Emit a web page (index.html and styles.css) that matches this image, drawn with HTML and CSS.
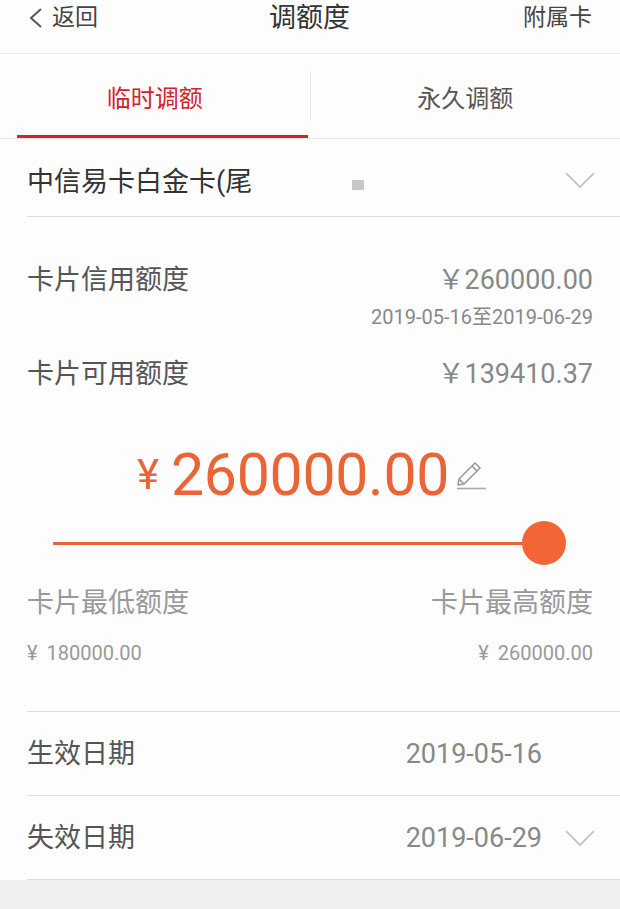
FILE: index.html
```html
<!DOCTYPE html>
<html lang="zh-CN">

<head>
    <meta charset="UTF-8">
    <meta name="viewport" content="width=device-width, initial-scale=1.0">
    <title>调额度</title>
    <link rel="stylesheet" href="styles.css">
</head>

<body>
    <div class="page">
        <header class="topbar">
            <div class="back">
                <svg class="back-icon" width="16" height="22" viewBox="0 0 16 22">
                    <polyline points="14,2 4,11 14,20" fill="none" stroke="#555" stroke-width="2" />
                </svg>
                <span>返回</span>
            </div>
            <div class="title">调额度</div>
            <div class="extra">附属卡</div>
        </header>

        <nav class="tabs">
            <div class="tab active">
                <span class="tab-label">临时调额</span>
                <span class="tab-bar"></span>
            </div>
            <span class="tab-divider"></span>
            <div class="tab">
                <span class="tab-label">永久调额</span>
                <span class="tab-bar"></span>
            </div>
        </nav>

        <div class="card-row">
            <span class="card-name">中信易卡白金卡(尾</span>
            <span class="mask"></span>
            <svg class="chevron" width="30" height="18" viewBox="0 0 30 18">
                <polyline points="1,2 15,16 29,2" fill="none" stroke="#bbb" stroke-width="1.6" />
            </svg>
        </div>

        <section class="limits">
            <div class="info-row">
                <span class="label">卡片信用额度</span>
                <div class="info-right">
                    <span class="value">￥260000.00</span>
                    <span class="period">2019-05-16至2019-06-29</span>
                </div>
            </div>
            <div class="info-row second">
                <span class="label">卡片可用额度</span>
                <span class="value">￥139410.37</span>
            </div>

            <div class="amount">
                <span class="amount-yen">¥</span>
                <span class="amount-num">260000.00</span>
                <svg class="pencil" width="34" height="34" viewBox="0 0 34 34">
                    <path d="M6 23 L22 7 L27 12 L11 28 L5 29 Z M19 10 L24 15 M6 23 L11 28" fill="none" stroke="#999" stroke-width="1.6" stroke-linejoin="round" />
                    <line x1="4" y1="32.5" x2="33" y2="32.5" stroke="#aaa" stroke-width="1.6" />
                </svg>
            </div>

            <div class="slider">
                <span class="slider-track"></span>
                <span class="slider-knob"></span>
            </div>

            <div class="range-row">
                <span class="range-label">卡片最低额度</span>
                <span class="range-label">卡片最高额度</span>
            </div>
            <div class="range-row values">
                <span class="range-value"><span class="yen">¥</span>180000.00</span>
                <span class="range-value"><span class="yen">¥</span>260000.00</span>
            </div>
        </section>

        <div class="date-row">
            <span class="label">生效日期</span>
            <span class="date-value">2019-05-16</span>
            <span class="chevron-space"></span>
        </div>
        <div class="date-row">
            <span class="label">失效日期</span>
            <span class="date-value">2019-06-29</span>
            <svg class="chevron" width="30" height="18" viewBox="0 0 30 18">
                <polyline points="1,2 15,16 29,2" fill="none" stroke="#bbb" stroke-width="1.6" />
            </svg>
        </div>
    </div>
</body>

</html>
```

FILE: styles.css
```css
body {
    margin: 0;
    padding: 0;
    background-color: #f0eff1;
    font-family: Roboto, "Noto Sans CJK SC", sans-serif;
    color: #444;
}

.page {
    width: 620px;
    background-color: #fdfdfd;
}

/* Top bar */
.topbar {
    display: grid;
    grid-template-columns: 1fr auto 1fr;
    align-items: start;
    height: 53px;
    padding: 0 28px 0 27px;
    border-bottom: 1px solid #e8e8e8;
    line-height: 36px;
}

.back {
    display: flex;
    align-items: center;
    gap: 9px;
    font-size: 23px;
    color: #444;
}

.back-icon {
    display: block;
}

.title {
    font-size: 27px;
    color: #333;
}

.extra {
    justify-self: end;
    font-size: 23px;
    color: #444;
}

/* Tabs */
.tabs {
    display: flex;
    align-items: center;
    height: 84px;
    border-bottom: 1px solid #e6e6e6;
}

.tab {
    flex: 1;
    height: 100%;
    display: flex;
    flex-direction: column;
}

.tab-label {
    flex: 1;
    display: flex;
    align-items: center;
    justify-content: center;
    font-size: 24px;
    color: #555;
    padding-top: 3px;
}

.tab-bar {
    height: 3px;
    margin: 0 2px 0 17px;
}

.tab.active .tab-label {
    color: #d2222d;
}

.tab.active .tab-bar {
    background-color: #d2222d;
}

.tab-divider {
    width: 1px;
    height: 50px;
    background-color: #e4e4e4;
}

/* Card selector */
.card-row {
    display: flex;
    align-items: center;
    height: 73px;
    padding: 4px 25px 0 0;
    margin-left: 27px;
    border-bottom: 1px solid #dedede;
}

.card-name {
    font-size: 27px;
    color: #333;
}

.mask {
    width: 12px;
    height: 10px;
    margin: 10px 0 0 100px;
    background-color: #c8c8c8;
}

.card-row .chevron {
    margin-left: auto;
}

.chevron {
    display: block;
}

/* Limits block */
.limits {
    padding: 46px 27px 45px 27px;
}

.info-row {
    display: flex;
    justify-content: space-between;
    align-items: flex-start;
}

.info-row.second {
    margin-top: 27px;
}

.label {
    font-size: 27px;
    line-height: 34px;
    color: #555;
}

.info-right {
    display: flex;
    flex-direction: column;
    align-items: flex-end;
}

.value {
    font-size: 27px;
    line-height: 34px;
    color: #888;
}

.period {
    margin-top: 7px;
    font-size: 20px;
    line-height: 26px;
    color: #888;
}

.amount {
    display: flex;
    justify-content: center;
    align-items: center;
    height: 70px;
    margin-top: 48px;
    color: #ea6436;
}

.amount-yen {
    font-size: 42px;
    margin: 0 12px 0 4px;
}

.amount-num {
    font-size: 59px;
    letter-spacing: -0.3px;
}

.pencil {
    display: block;
    margin: -2px 0 0 4px;
}

.slider {
    display: flex;
    align-items: center;
    height: 44px;
    margin: 12px 27px 0 26px;
}

.slider-track {
    flex: 1;
    height: 3px;
    background-color: #ea6436;
}

.slider-knob {
    width: 44px;
    height: 44px;
    margin-left: -10px;
    border-radius: 50%;
    background-color: #f26536;
}

.range-row {
    display: flex;
    justify-content: space-between;
    margin-top: 21px;
}

.range-label {
    font-size: 27px;
    line-height: 34px;
    color: #999;
}

.range-row.values {
    margin-top: 20px;
}

.range-value {
    font-size: 20px;
    line-height: 26px;
    color: #999;
}

.yen {
    margin-right: 9px;
}

/* Date rows */
.date-row {
    display: flex;
    align-items: center;
    height: 83px;
    margin-left: 27px;
    padding-right: 25px;
    border-top: 1px solid #dedede;
}

.date-row:last-child {
    border-bottom: 1px solid #dedede;
}

.date-value {
    margin: 0 23px 0 auto;
    font-size: 27px;
    color: #888;
}

.chevron-space {
    width: 30px;
}
```
